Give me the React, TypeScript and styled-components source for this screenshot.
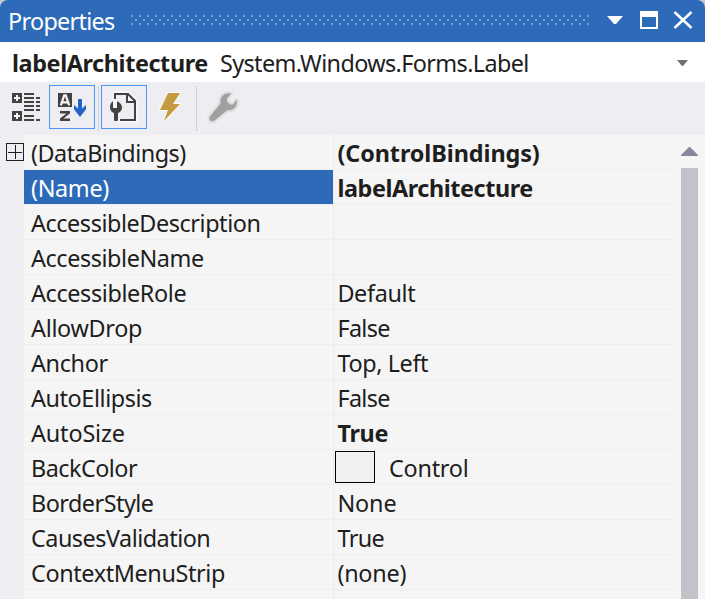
import React from 'react';
import styled, { createGlobalStyle } from 'styled-components';

const Global = createGlobalStyle`
  * { box-sizing: border-box; }
  body { margin: 0; overflow: hidden; background: #c8cbd2; font-family: "Noto Sans", "Open Sans", sans-serif; font-size: 23.4px; color: #1e1e1e; }
`;

const Panel = styled.main`
  width: 705px;
  height: 599px;
  display: flex;
  flex-direction: column;
  overflow: hidden;
`;
const TitleBar = styled.header`
  height: 42px;
  flex: none;
  display: flex;
  background: #2d6bb8;
  color: #fff;
  border-radius: 8px 8px 0 0;
  padding-left: 8px;
`;
const Text = styled.span<{ $w?: number; $bold?: boolean; $ls?: number }>`
  display: block;
  width: ${p => (p.$w ? p.$w + 'px' : 'auto')};
  white-space: pre;
  font-weight: ${p => (p.$bold ? 700 : 400)};
  letter-spacing: ${p => p.$ls ?? 0}px;
`;
const Title = styled(Text)`
  width: 123px;
  line-height: 43px;
`;
const Grip = styled.svg`
  width: 460px;
  height: 42px;
  flex: none;
`;
const WindowButtons = styled.svg`
  width: 114px;
  height: 42px;
  flex: none;
`;
const ObjectSelector = styled.div`
  height: 40px;
  flex: none;
  display: flex;
  background: #fff;
  padding-left: 12px;
  line-height: 42px;
`;
const Caret = styled.svg`
  width: 11px;
  height: 6px;
  margin: 18px 17px 0 auto;
`;
const Toolbar = styled.div`
  height: 53px;
  flex: none;
  display: flex;
  background: #eeeef2;
  padding: 3px 0 0 3px;
`;
const Tool = styled.button<{ $active?: boolean }>`
  width: 46px;
  height: 44px;
  padding: 0;
  border: 1px solid ${p => (p.$active ? '#4a96f5' : 'transparent')};
  background: transparent;
  svg { display: block; width: 44px; height: 42px; }
`;
const Divider = styled.i`
  width: 1px;
  height: 45px;
  margin: 1px 2px 0 3px;
  background: #cccedb;
`;
const Body = styled.div`
  flex: 1;
  display: flex;
  min-height: 0;
  background: #f5f5f5;
`;
const Gutter = styled.div`
  width: 24px;
  background: #eeeef2;
  padding: 8px 0 0 6px;
  svg { display: block; }
`;
const Rows = styled.div`
  width: 648px;
`;
const Row = styled.div`
  height: 35px;
  display: flex;
  border-bottom: 1px solid #eeeef0;
  line-height: 36px;
`;
const Name = styled.div<{ $selected?: boolean }>`
  width: 309px;
  padding-left: 7px;
  background: ${p => (p.$selected ? '#2d6bb8' : 'transparent')};
  color: ${p => (p.$selected ? '#fff' : 'inherit')};
`;
const Value = styled.div`
  flex: 1;
  display: flex;
  border-left: 1px solid #ececef;
  padding-left: 3.4px;
`;
const Swatch = styled.i`
  width: 40px;
  height: 32px;
  margin: 1px 14px 0 -2.4px;
  border: 1px solid #000;
  background: #f0f0f0;
`;
const Scroll = styled.div`
  width: 33px;
  padding: 12px 7px 0 9px;
  display: flex;
  flex-direction: column;
  svg { display: block; flex: none; }
`;
const Thumb = styled.div`
  flex: 1;
  margin-top: 12px;
  background: #c2c3c9;
`;

type Item = { name: string; value: string; bold?: boolean; selected?: boolean; swatch?: boolean; nls?: number; vls?: number };
const items: Item[] = [
  { name: '(DataBindings)', value: '(ControlBindings)', bold: true, nls: -0.52, vls: -0.08 },
  { name: '(Name)', value: 'labelArchitecture', bold: true, selected: true, nls: -0.35, vls: -0.42 },
  { name: 'AccessibleDescription', value: '', nls: -0.43 },
  { name: 'AccessibleName', value: '', nls: -0.42 },
  { name: 'AccessibleRole', value: 'Default', nls: -0.38, vls: -0.35 },
  { name: 'AllowDrop', value: 'False', nls: -0.3, vls: -0.65 },
  { name: 'Anchor', value: 'Top, Left', nls: -0.35, vls: -0.38 },
  { name: 'AutoEllipsis', value: 'False', nls: -0.42, vls: -0.65 },
  { name: 'AutoSize', value: 'True', bold: true, nls: -0.15, vls: -0.3 },
  { name: 'BackColor', value: 'Control', swatch: true, nls: -0.52, vls: -0.25 },
  { name: 'BorderStyle', value: 'None', nls: -0.52, vls: -0.1 },
  { name: 'CausesValidation', value: 'True', nls: -0.5, vls: -0.6 },
  { name: 'ContextMenuStrip', value: '(none)', nls: -0.38, vls: -0.25 },
  { name: '', value: '' },
];

const CategoryIcon = () => (
  <svg viewBox="4 86 44 42" shapeRendering="crispEdges">
    <path fill="#424242" d="M12 93h10v10H12zM12 111h10v10H12z" />
    <path fill="#f5f5f5" d="M16 95h2v2h2v2h-2v2h-2v-2h-2v-2h2zM16 113h2v2h2v2h-2v2h-2v-2h-2v-2h2z" />
    <path fill="#424242" d="M24 93h10v2H24zM24 97h10v2H24zM24 101h10v2H24zM24 105h10v2H24zM24 109h10v2H24zM24 115h10v2H24zM24 119h10v2H24zM36 97h4v2h-4zM36 101h4v2h-4zM36 105h4v2h-4zM36 109h4v2h-4zM36 119h4v2h-4z" />
  </svg>
);
const SortIcon = () => (
  <svg viewBox="50 86 44 42">
    <path fill="#424242" d="M58 93h14v14H58z" />
    <path fill="none" stroke="#f5f5f5" strokeWidth="2.2" d="M60.8 105.4l3.4-10h1.6l3.4 10M62 102.4h6" />
    <path fill="#424242" d="M60 111h10v2.3l-6.5 5.2H70V121H60v-2.4l6.4-5.1H60z" />
    <path fill="#2464c8" d="M78 99h4v9.5l4-3.5v4.2l-6 7.8-6-7.8V105l4 3.5z" />
  </svg>
);
const PagesIcon = () => (
  <svg viewBox="102 86 44 42">
    <path fill="#f7f7f9" d="M113 91h16l9 9v23h-22v-7l-5-5z" />
    <path fill="#eeeef2" d="M116 95h11v7h7v17h-14z" />
    <path fill="none" stroke="#424242" strokeWidth="2" d="M115 99v-5h13l7 7v19h-15M127 94v8h8" />
    <path fill="#424242" d="M113 101.2v6.8h4v-6.8c3 1 5 3.3 5 6.2 0 2.6-1.6 4.8-4 5.6v7q0 1-1 1h-2q-1 0-1-1v-7c-2.4-.8-4-3-4-5.6 0-2.9 1-5.2 3-6.2z" />
  </svg>
);
const BoltIcon = () => (
  <svg viewBox="148 86 44 42">
    <path fill="#c59b42" stroke="#fbfbf8" strokeWidth="2" paintOrder="stroke" d="M168 93h12l-7 11h7l-16 17 4-11h-8z" />
  </svg>
);
const WrenchIcon = () => (
  <svg viewBox="200 86 44 42">
    <g stroke="#dedee0" strokeWidth="4" strokeLinejoin="round" paintOrder="stroke" fill="#a0a0a0">
      <path d="M231 93.5l-4 5v3l3 3h3l3.5-4.5c1.5 6-2.5 11-9 10l-13 10.500c-3 2-6.500-1-4.500-4l10.500-13c-1-6.500 4-11.500 10.500-10z" />
    </g>
  </svg>
);

const spots: [number, number][] = [];
for (let i = 0; i < 58; i++) {
  const x = i * 8;
  spots.push([x, 15], [x, 23]);
  if (i < 57) spots.push([x + 4, 19]);
}

export default function App() {
  return (
    <>
      <Global />
      <Panel>
        <TitleBar>
          <Title $ls={-0.7}>Properties</Title>
          <Grip shapeRendering="crispEdges">
            {spots.map(([x, y], i) => <rect key={i} x={x} y={y} width="2" height="2" fill="#6ea6dc" />)}
          </Grip>
          <WindowButtons viewBox="591 0 114 42">
            <path fill="#fff" d="M607 16h16l-7 8h-2z" />
            <path fill="#fff" fillRule="evenodd" d="M640 11h18v18h-18zM642 17v10h14V17z" />
            <path fill="none" stroke="#fff" strokeWidth="2.5" d="M674.500 12l17 16M691.500 12l-17 16" />
          </WindowButtons>
        </TitleBar>
        <ObjectSelector>
          <Text $w={208} $bold $ls={-0.4}>labelArchitecture</Text>
          <Text $ls={-0.62}>System.Windows.Forms.Label</Text>
          <Caret><path fill="#717171" d="M0 0h11L6 6H5z" /></Caret>
        </ObjectSelector>
        <Toolbar>
          <Tool><CategoryIcon /></Tool>
          <Tool $active><SortIcon /></Tool>
          <Divider />
          <Tool $active><PagesIcon /></Tool>
          <Tool><BoltIcon /></Tool>
          <Divider />
          <Tool><WrenchIcon /></Tool>
        </Toolbar>
        <Body>
          <Gutter>
            <svg width="18" height="18" shapeRendering="crispEdges">
              <path fill="none" stroke="#1e1e1e" d="M.5.5h17v17H.5zM2 9.5h14M9.5 2v14" />
            </svg>
          </Gutter>
          <Rows>
            {items.map((it, i) => (
              <Row key={i}>
                <Name $selected={it.selected}><Text $ls={it.nls}>{it.name}</Text></Name>
                <Value>
                  {it.swatch && <Swatch />}
                  <Text $bold={it.bold} $ls={it.vls}>{it.value}</Text>
                </Value>
              </Row>
            ))}
          </Rows>
          <Scroll>
            <svg width="17" height="9"><path fill="#868999" d="M8 0h1l8 8v1H0V8z" /></svg>
            <Thumb />
          </Scroll>
        </Body>
      </Panel>
    </>
  );
}
